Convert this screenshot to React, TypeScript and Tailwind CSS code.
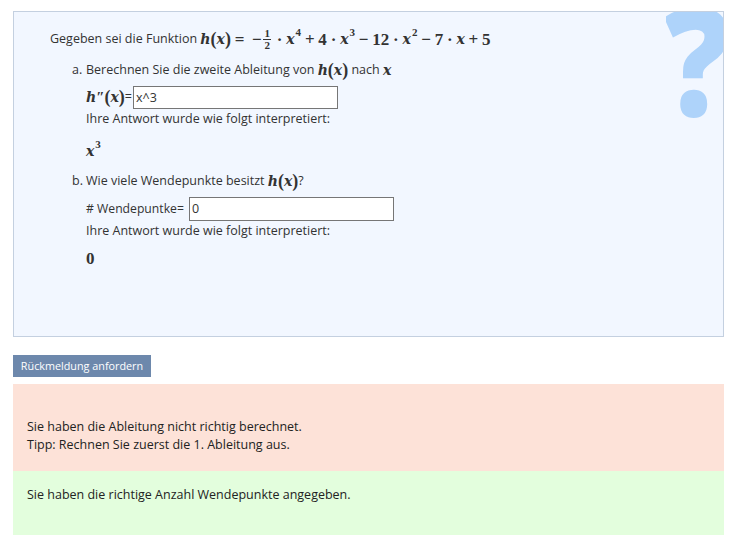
const sans = "font-['Open_Sans',sans-serif]";

function V({ children }: { children: string }) {
    return <i className="font-['DejaVu_Serif',serif] font-bold text-[14px] leading-none text-[#333]">{children}</i>;
}

function N({ children }: { children: string }) {
    return <b className="font-['Liberation_Serif',serif] text-[17px] leading-none text-[#333]">{children}</b>;
}

function P({ children }: { children: string }) {
    return <span className="font-['Liberation_Serif',serif] text-[18px] leading-none text-[#333] font-bold">{children}</span>;
}

function Sup({ children }: { children: string }) {
    return <sup className="font-['Liberation_Serif',serif] font-bold text-[11px] leading-none text-[#333] -top-[7px] ml-px">{children}</sup>;
}

function Op({ children }: { children: string }) {
    return <span className="font-['Liberation_Serif',serif] font-bold text-[17px] leading-none text-[#333] mx-[3.8px]">{children}</span>;
}

function Hx() {
    return (
        <span className="inline-flex items-center whitespace-nowrap">
            <V>h</V>
            <P>(</P>
            <V>x</V>
            <P>)</P>
        </span>
    );
}

export default function App() {
    return (
        <div className={`${sans} w-[740px] h-[554px] bg-white pt-[11px] px-[13px] text-[12.5px] text-[#333] overflow-hidden`}>
            {/* Question box */}
            <div className="relative w-[711px] h-[326px] bg-[#f2f7ff] border border-[#c4d0e0] overflow-hidden pl-[36px] pt-[16px]">
                <div className="absolute left-[652px] top-0 w-[58px] h-[107px] overflow-hidden select-none" aria-hidden="true">
                    <div className="-mt-[29px] -ml-[2px] origin-left scale-x-[0.88] text-[150px] leading-[1] font-extrabold text-[#aed3fa]">?</div>
                </div>

                <p className="relative flex items-center h-[22px] whitespace-pre">
                    Gegeben sei die Funktion{' '}
                    <Hx />
                    <Op>=</Op>
                    <Op>−</Op>
                    <span className="inline-flex flex-col items-center -ml-[2px] mr-[2px] font-['Liberation_Serif',serif] font-bold text-[11px] leading-[11px]">
                        <span>1</span>
                        <span className="border-t border-[#333] px-px">2</span>
                    </span>
                    <Op>·</Op>
                    <V>x</V>
                    <Sup>4</Sup>
                    <Op>+</Op>
                    <N>4</N>
                    <Op>·</Op>
                    <V>x</V>
                    <Sup>3</Sup>
                    <Op>−</Op>
                    <N>12</N>
                    <Op>·</Op>
                    <V>x</V>
                    <Sup>2</Sup>
                    <Op>−</Op>
                    <N>7</N>
                    <Op>·</Op>
                    <V>x</V>
                    <Op>+</Op>
                    <N>5</N>
                </p>

                <div className="relative pl-[36px] mt-[9px]">
                    <p className="relative flex items-center h-[22px] whitespace-pre">
                        <span className="absolute -left-[14px]">a.</span>
                        Berechnen Sie die zweite Ableitung von <Hx /> nach <V>x</V>
                    </p>
                    <div className="flex items-center h-[24px] mt-[4px]">
                        <V>h</V>
                        <span className="font-['Liberation_Serif',serif] font-bold text-[15px] leading-none">″</span>
                        <P>(</P>
                        <V>x</V>
                        <P>)</P>
                        <span>=</span>
                        <div className="w-[205px] h-[23px] ml-px bg-white border border-[#767676] px-[2px] leading-[21px]">x^3</div>
                    </div>
                    <p className="leading-[18px] mt-px">Ihre Antwort wurde wie folgt interpretiert:</p>
                    <div className="flex items-center h-[22px] mt-[12px]">
                        <V>x</V>
                        <Sup>3</Sup>
                    </div>

                    <p className="relative flex items-center h-[22px] whitespace-pre mt-[8px]">
                        <span className="absolute -left-[14px]">b.</span>
                        Wie viele Wendepunkte besitzt <Hx />?
                    </p>
                    <div className="flex items-center h-[24px] mt-[5px]">
                        <span className="w-[103px] text-[12.2px] whitespace-nowrap"># Wendepuntke=</span>
                        <div className="w-[205px] h-[24px] bg-white border border-[#767676] px-[2px] leading-[22px]">0</div>
                    </div>
                    <p className="leading-[18px] mt-px">Ihre Antwort wurde wie folgt interpretiert:</p>
                    <div className="flex items-center h-[22px] mt-[7px]">
                        <N>0</N>
                    </div>
                </div>
            </div>

            <div className="w-[138px] h-[22px] mt-[18px] bg-[#6d88ac] text-white text-[10.8px] leading-[22px] text-center">
                Rückmeldung anfordern
            </div>

            {/* Feedback */}
            <div className="w-[711px] h-[87px] mt-[7px] bg-[#fde2d8] pl-[14px] pt-[34px] text-[#222] leading-[18px]">
                <p>Sie haben die Ableitung nicht richtig berechnet.</p>
                <p>Tipp: Rechnen Sie zuerst die 1. Ableitung aus.</p>
            </div>
            <div className="w-[711px] h-[64px] bg-[#e3fedd] pl-[14px] pt-[15px] text-[#222] leading-[18px]">
                <p>Sie haben die richtige Anzahl Wendepunkte angegeben.</p>
            </div>
        </div>
    );
}
